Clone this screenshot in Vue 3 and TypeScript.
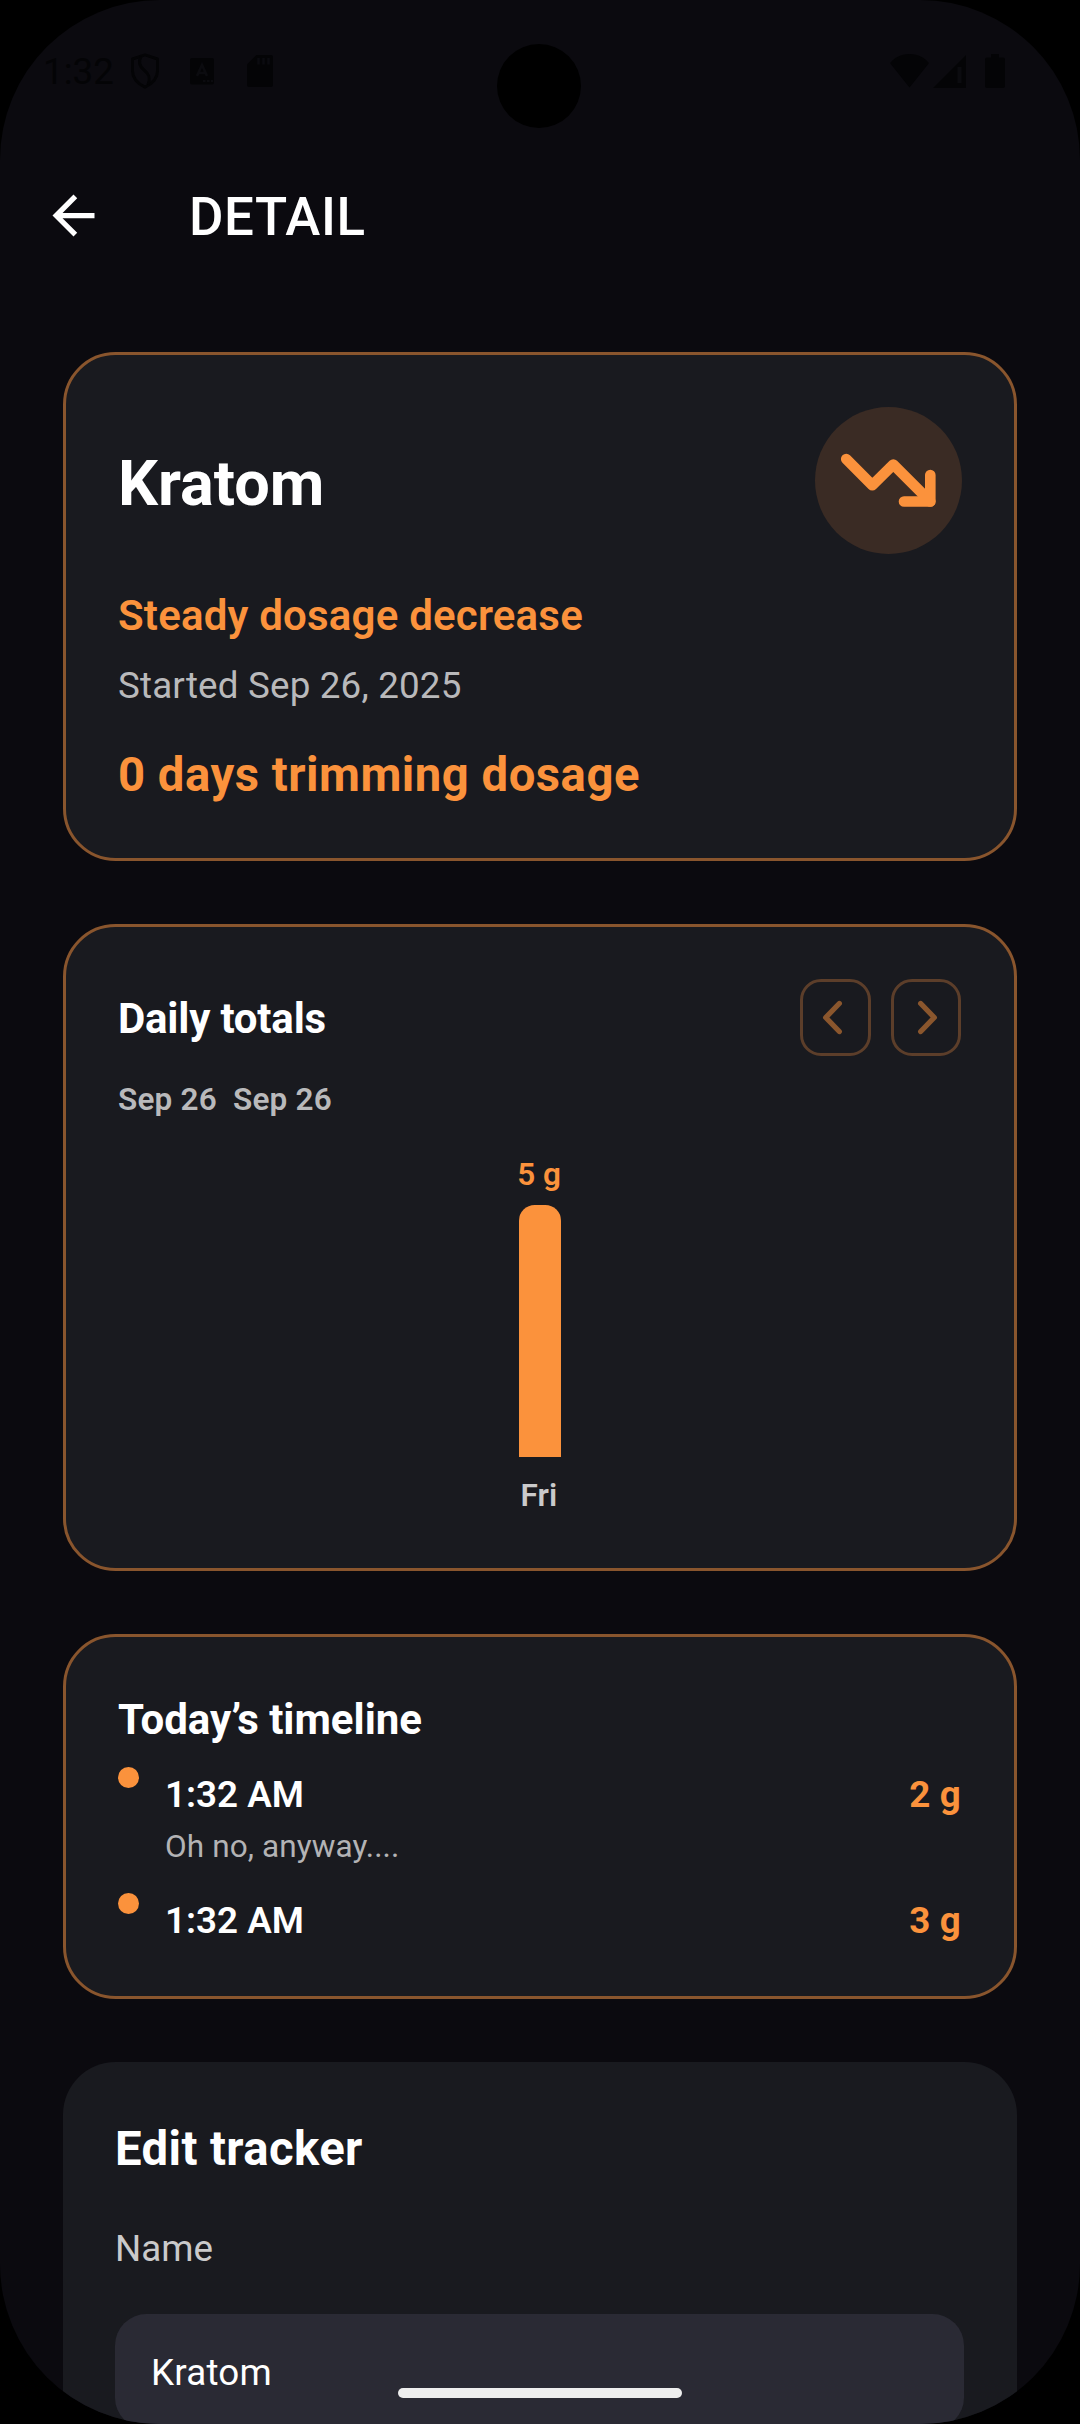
<script setup lang="ts">
interface DayTotal {
  label: string
  amount: number
}

interface TimelineEntry {
  time: string
  amount: number
  note?: string
}

const unit = 'g'
const chartHeight = 252

const totals: DayTotal[] = [{ label: 'Fri', amount: 5 }]
const peak = Math.max(...totals.map((day) => day.amount))

const timeline: TimelineEntry[] = [
  { time: '1:32 AM', amount: 2, note: 'Oh no, anyway....' },
  { time: '1:32 AM', amount: 3 },
]
</script>

<template>
  <div class="screen">
    <div class="camera"></div>

    <div class="status">
      <span class="clock">1:32</span>
      <svg class="shield" width="30" height="36" viewBox="0 0 30 36" fill="none" stroke="currentColor" stroke-width="3">
        <path d="M15 1.8 27.500 6v12c0 7-5 12.500-12.500 16.200C7.500 30.500 2.500 25 2.500 18V6z" stroke-linejoin="round" />
        <path d="M11 3.500C8 9 9 13 14 17c5 4 7 8 4 14.500" />
      </svg>
      <svg class="lang" width="24" height="27" viewBox="0 0 24 27">
        <rect width="24" height="26.500" rx="2" fill="currentColor" />
        <path d="M7 18 12 7l5 11M9 15h6" fill="none" stroke="#0b0b0f" stroke-width="2.600" />
        <path d="M13 23h2.500M17 23h2.500M21 23h2" stroke="#0b0b0f" stroke-width="2" />
      </svg>
      <svg class="sd" width="26" height="32" viewBox="0 0 26 32">
        <path d="M9.500 0H24a2 2 0 0 1 2 2v28a2 2 0 0 1-2 2H2a2 2 0 0 1-2-2V9.500z" fill="currentColor" />
        <path d="M11.500 3v6.500M16.500 3v6.500M21.500 3v6.500" stroke="#0b0b0f" stroke-width="2.600" />
      </svg>
      <div class="radios">
        <svg width="39" height="34" viewBox="0 0 39 34">
          <path d="M19.500 33.500 0 9C5 3 12 0 19.500 0S34 3 39 9z" fill="currentColor" />
        </svg>
        <svg class="signal" width="33" height="33" viewBox="0 0 33 33">
          <path d="M33 0v33H0z" fill="currentColor" />
          <path d="M26.500 12v16" stroke="#0b0b0f" stroke-width="4" />
        </svg>
        <svg class="battery" width="20" height="34" viewBox="0 0 20 34">
          <path d="M6 0h8v3.500h4a2 2 0 0 1 2 2V32a2 2 0 0 1-2 2H2a2 2 0 0 1-2-2V5.500a2 2 0 0 1 2-2h4z" fill="currentColor" />
        </svg>
      </div>
    </div>

    <header class="bar">
      <svg class="back" width="63" height="63" viewBox="0 0 24 24" fill="#fff">
        <path d="M20 11H7.830l5.590-5.590L12 4l-8 8 8 8 1.410-1.410L7.830 13H20v-2z" />
      </svg>
      <h1>DETAIL</h1>
    </header>

    <main>
      <section class="card summary">
        <div class="summary-head">
          <h2>Kratom</h2>
          <div class="trend">
            <svg width="147" height="147" viewBox="0 0 147 147" fill="none" stroke="#fb923c" stroke-width="10.600" stroke-linecap="round" stroke-linejoin="round">
              <path d="M31.200 52 57.300 78.300 78.300 57.500 115.300 94.500" />
              <path d="M115.300 68v26.500H89" />
            </svg>
          </div>
        </div>
        <p class="mode">Steady dosage decrease</p>
        <p class="started">Started Sep 26, 2025</p>
        <p class="streak">0 days trimming dosage</p>
      </section>

      <section class="card totals">
        <div class="totals-head">
          <h3>Daily totals</h3>
          <div class="pager">
            <button type="button" aria-label="Previous">
              <svg width="65" height="71" viewBox="0 0 65 71">
                <path d="M36.300 21.500 22.700 35.500l13.600 14" />
              </svg>
            </button>
            <button type="button" aria-label="Next">
              <svg width="64" height="71" viewBox="0 0 64 71">
                <path d="M26.700 21.500 40.300 35.500l-13.600 14" />
              </svg>
            </button>
          </div>
        </div>
        <p class="range">Sep 26&nbsp; Sep 26</p>
        <div class="chart">
          <div v-for="day in totals" :key="day.label" class="day">
            <span class="value">{{ day.amount }} {{ unit }}</span>
            <div class="column" :style="{ height: (day.amount / peak) * chartHeight + 'px' }"></div>
            <span class="label">{{ day.label }}</span>
          </div>
        </div>
      </section>

      <section class="card today">
        <h3>Today’s timeline</h3>
        <ul>
          <li v-for="(entry, i) in timeline" :key="i">
            <span class="dot"></span>
            <div class="entry">
              <div class="time">{{ entry.time }}</div>
              <div v-if="entry.note" class="note">{{ entry.note }}</div>
            </div>
            <span class="amount">{{ entry.amount }} {{ unit }}</span>
          </li>
        </ul>
      </section>

      <section class="card edit">
        <h2>Edit tracker</h2>
        <label>Name</label>
        <div class="field">Kratom</div>
      </section>
    </main>

    <div class="home"></div>
  </div>
</template>

<style>
body {
  background: #000;
}
</style>

<style scoped>
* {
  box-sizing: border-box;
  margin: 0;
  padding: 0;
}

.screen {
  position: relative;
  width: 1080px;
  height: 2424px;
  overflow: hidden;
  border-radius: 160px;
  background: #0b0a0f;
  font-family: Roboto, sans-serif;
  color: #fff;
}

.camera {
  position: absolute;
  top: 44px;
  left: 497px;
  width: 84px;
  height: 84px;
  border-radius: 50%;
  background: #000;
}

.status {
  display: flex;
  align-items: center;
  height: 142px;
  padding: 0 75px 0 43px;
  color: #040406;
}

.status svg {
  display: block;
  flex: none;
}

.clock {
  width: 87px;
  font-size: 36.75px;
}

.lang {
  margin-left: 30px;
}

.sd {
  margin-left: 33px;
}

.radios {
  display: flex;
  align-items: center;
  margin-left: auto;
}

.signal {
  margin-left: 4px;
}

.battery {
  margin-left: 19px;
}

.bar {
  display: flex;
  align-items: center;
  height: 146px;
  padding-left: 42px;
}

.back {
  flex: none;
}

.bar h1 {
  margin-left: 84px;
  padding-top: 4px;
  font-size: 52.8px;
  line-height: 62px;
  font-weight: 500;
  letter-spacing: 0.6px;
}

main {
  display: flex;
  flex-direction: column;
  gap: 63px;
  padding: 64px 63px 0;
}

.card {
  flex: none;
  padding: 52px;
  border: 3px solid #89552d;
  border-radius: 52.5px;
  background: #191a1f;
}

.summary {
  height: 509px;
}

.summary-head {
  display: flex;
  align-items: center;
  justify-content: space-between;
  height: 147px;
}

.summary-head h2 {
  padding-top: 6px;
  font-size: 63px;
  line-height: 74px;
  font-weight: 700;
  letter-spacing: 0;
}

.trend {
  width: 147px;
  height: 147px;
  border-radius: 50%;
  background: #3a2b24;
}

.trend svg {
  display: block;
}

.mode {
  margin-top: 37px;
  font-size: 42px;
  line-height: 50px;
  font-weight: 600;
  letter-spacing: 0.2px;
  color: #fb923c;
}

.started {
  margin-top: 23px;
  font-size: 36.75px;
  line-height: 44px;
  letter-spacing: 0.18px;
  color: #b9b9bb;
}

.streak {
  margin-top: 39px;
  font-size: 47.25px;
  line-height: 56px;
  font-weight: 700;
  letter-spacing: 0.5px;
  color: #fb923c;
}

.totals {
  height: 647px;
}

.totals-head {
  display: flex;
  align-items: center;
  justify-content: space-between;
  height: 77px;
}

.totals-head h3,
.today h3 {
  font-size: 42px;
  line-height: 50px;
  font-weight: 700;
}

.totals-head h3 {
  padding-top: 2px;
  letter-spacing: -0.2px;
}

.pager {
  display: flex;
  gap: 20px;
  padding-right: 1px;
}

.pager button {
  height: 77px;
  border: 3px solid #5c3e2a;
  border-radius: 21px;
  background: transparent;
}

.pager svg {
  display: block;
  fill: none;
  stroke: #8a562d;
  stroke-width: 5.3;
  stroke-linecap: round;
  stroke-linejoin: round;
}

.range {
  margin-top: 25px;
  font-size: 31.5px;
  line-height: 38px;
  font-weight: 600;
  letter-spacing: 0.2px;
  color: #b9b9bb;
}

.chart {
  display: flex;
  justify-content: center;
  margin-top: 37px;
}

.day {
  display: flex;
  flex-direction: column;
  align-items: center;
  font-size: 31.5px;
  line-height: 38px;
  font-weight: 600;
}

.value {
  padding-right: 2px;
  color: #fb923c;
}

.column {
  width: 42px;
  margin-top: 11px;
  border-radius: 15.75px 15.75px 0 0;
  background: #fb923c;
}

.label {
  margin-top: 20px;
  padding-right: 2px;
  letter-spacing: 0.2px;
  color: #cacacb;
}

.today {
  height: 365px;
}

.today h3 {
  padding-top: 6px;
  line-height: 50px;
}

.today ul {
  display: flex;
  flex-direction: column;
  gap: 27px;
  margin-top: 22px;
  list-style: none;
}

.today li {
  display: flex;
}

.dot {
  flex: none;
  width: 21px;
  height: 21px;
  border-radius: 50%;
  background: #fb923c;
}

.entry {
  flex: 1;
  padding: 6px 0 0 26px;
}

.time,
.amount {
  font-size: 36.75px;
  line-height: 44px;
  font-weight: 600;
}

.note {
  margin-top: 11px;
  font-size: 31.5px;
  line-height: 38px;
  letter-spacing: 0.1px;
  color: #b3b3b5;
}

.amount {
  padding: 6px 1px 0 0;
  font-weight: 700;
  letter-spacing: 0.2px;
  color: #fb923c;
}

.edit {
  display: flex;
  flex-direction: column;
  height: 520px;
  padding: 59px 53px 0 52px;
  border: 0;
}

.edit h2 {
  font-size: 47.25px;
  line-height: 56px;
  font-weight: 700;
  letter-spacing: 0.4px;
}

.edit label {
  margin-top: 50px;
  font-size: 36.75px;
  line-height: 44px;
  color: #cacacb;
}

.field {
  height: 115px;
  margin-top: 43px;
  padding-left: 36px;
  border-radius: 31.5px;
  background: #2a2a34;
  font-size: 36.75px;
  line-height: 117px;
  letter-spacing: 0.2px;
}

.home {
  position: absolute;
  left: 398px;
  bottom: 26px;
  width: 284px;
  height: 10px;
  border-radius: 5px;
  background: #eee;
}
</style>
